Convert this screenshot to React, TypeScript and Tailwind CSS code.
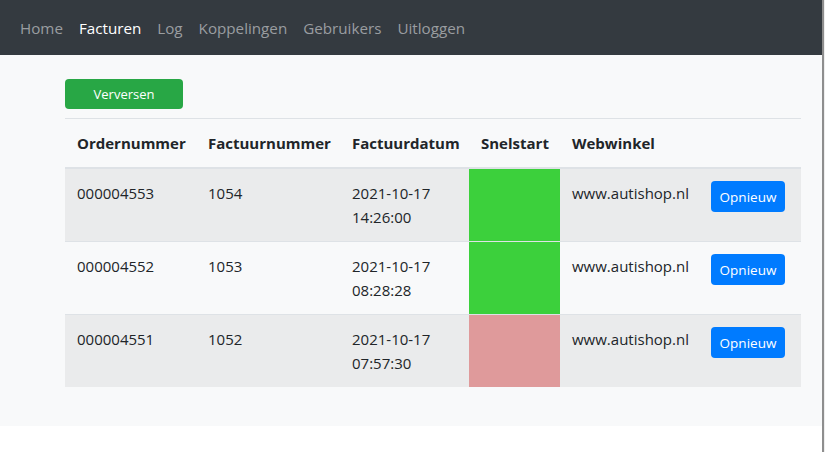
import React from 'react';

// Invoice rows: status true = synced to Snelstart (green), false = failed (red)
const rows = [
  { order: '000004553', invoice: '1054', date: '2021-10-17', time: '14:26:00', ok: true, shop: 'www.autishop.nl' },
  { order: '000004552', invoice: '1053', date: '2021-10-17', time: '08:28:28', ok: true, shop: 'www.autishop.nl' },
  { order: '000004551', invoice: '1052', date: '2021-10-17', time: '07:57:30', ok: false, shop: 'www.autishop.nl' },
];

const navItems = ['Home', 'Facturen', 'Log', 'Koppelingen', 'Gebruikers', 'Uitloggen'];

export default function App() {
  return (
    <div className="flex min-h-[452px] bg-white font-['Open_Sans',sans-serif] text-[#212529]">
      <div className="flex-1 flex flex-col">
        {/* Top navbar */}
        <nav className="h-[55px] bg-[#343a40] flex items-center px-3">
          {navItems.map((item) => (
            <a
              key={item}
              className={`px-2 text-[15.2px] leading-6 ${item === 'Facturen' ? 'text-white' : 'text-[#9a9da0]'}`}
            >
              {item}
            </a>
          ))}
        </nav>

        {/* Main content */}
        <main className="bg-[#f8f9fa] h-[371px] pl-[65px] pr-[21px] pt-6">
          <button className="w-[118px] h-[30px] rounded bg-[#28a745] text-white text-[13px] leading-5">
            Verversen
          </button>

          <table className="mt-[9px] w-full table-fixed border-collapse text-[15px] leading-6">
            <thead>
              <tr className="border-t border-[#dee2e6]">
                <th className="w-[131px] text-left font-bold px-3 py-3 border-b-2 border-[#dee2e6]">Ordernummer</th>
                <th className="w-[144px] text-left font-bold px-3 py-3 border-b-2 border-[#dee2e6]">Factuurnummer</th>
                <th className="w-[129px] text-left font-bold px-3 py-3 border-b-2 border-[#dee2e6]">Factuurdatum</th>
                <th className="w-[91px] text-left font-bold px-3 py-3 border-b-2 border-[#dee2e6]">Snelstart</th>
                <th className="w-[139px] text-left font-bold px-3 py-3 border-b-2 border-[#dee2e6]">Webwinkel</th>
                <th className="text-left font-bold px-3 py-3 border-b-2 border-[#dee2e6]"></th>
              </tr>
            </thead>
            <tbody>
              {rows.map((r, i) => (
                <tr key={r.order} className={`${i % 2 === 0 ? 'bg-[#eaebec]' : ''} ${i > 0 ? 'border-t border-[#dee2e6]' : ''}`}>
                  <td className="px-3 py-3 align-top">{r.order}</td>
                  <td className="px-3 py-3 align-top">{r.invoice}</td>
                  <td className="px-3 py-3 align-top">
                    {r.date}
                    <br />
                    {r.time}
                  </td>
                  <td className={`px-3 py-3 ${r.ok ? 'bg-[#3cd03c]' : 'bg-[#df9a9b]'}`}></td>
                  <td className="px-3 py-3 align-top whitespace-nowrap">{r.shop}</td>
                  <td className="px-3 py-3 align-top">
                    <button className="w-[74px] h-[31px] rounded bg-[#007bff] text-white text-[13.5px] leading-5">
                      Opnieuw
                    </button>
                  </td>
                </tr>
              ))}
            </tbody>
          </table>
        </main>
      </div>
      {/* window edge */}
      <div className="w-[2px] bg-[#8e8e8e]" />
      <div className="w-px bg-[#eeeeee]" />
    </div>
  );
}
